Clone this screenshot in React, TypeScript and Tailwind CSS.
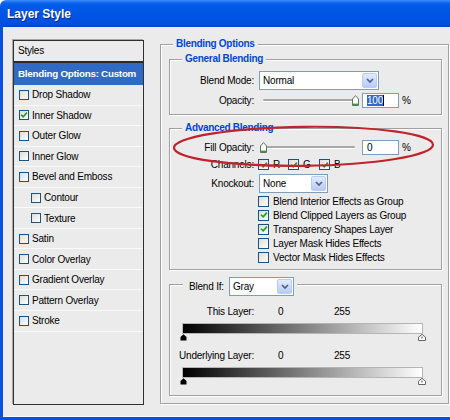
import React from "react";

function Check({ checked, small }: { checked?: boolean; small?: boolean }) {
  return (
    <span
      className={`flex shrink-0 items-center justify-center border border-[#1C5180] bg-[linear-gradient(135deg,#DCDCD7,#FFFFFF)] ${
        small ? "h-[10px] w-[10px]" : "h-[11px] w-[11px]"
      }`}
    >
      {checked && (
        <svg viewBox="0 0 9 9" className="h-[8px] w-[8px]">
          <path d="M1.2 4.2 L3.6 6.6 L7.8 1.8" stroke="#21A121" strokeWidth="1.9" fill="none" />
        </svg>
      )}
    </span>
  );
}

function Chevron() {
  return (
    <svg viewBox="0 0 8 5" className="h-[5px] w-[8px]">
      <path d="M1 1 L4 4 L7 1" stroke="#4D6185" strokeWidth="1.7" fill="none" />
    </svg>
  );
}

function Select({ value, w }: { value: string; w: string }) {
  return (
    <div className={`flex h-[19px] items-stretch border border-[#7F9DB9] bg-white ${w}`}>
      <span className="flex-1 pl-[3px] leading-[17px]">{value}</span>
      <span className="m-[1px] flex w-[15px] items-center justify-center rounded-[2px] border border-[#B9CCF5] bg-[linear-gradient(#E3EBFE,#B7CBF7)]">
        <Chevron />
      </span>
    </div>
  );
}

function Thumb() {
  return (
    <svg viewBox="0 0 7 11" className="h-[11px] w-[7px]">
      <path d="M0.5 4 L3.5 0.6 L6.5 4 L6.5 10.5 L0.5 10.5 Z" fill="#fff" stroke="#6B6B6B" strokeWidth="1" />
      <rect x="1" y="8.6" width="5" height="1.5" fill="#2CA52C" />
    </svg>
  );
}

function Slider({ full }: { full?: boolean }) {
  return (
    <div className="relative ml-[5px] h-[15px] w-[100px]">
      <div className="ml-[4px] mt-[6px] h-[2px] w-[92px] rounded-[1px] bg-[#A9A9A9] shadow-[0_1px_0_#fff]" />
      <div className={`absolute top-[2px] ${full ? "left-[93px]" : "left-[1px]"}`}>
        <Thumb />
      </div>
    </div>
  );
}

function TextBox({ children }: { children: React.ReactNode }) {
  return (
    <div className="ml-[3px] flex h-[15px] w-[37px] items-center border border-[#7F9DB9] bg-white pl-[4px]">
      {children}
    </div>
  );
}

function GroupTitle({ children }: { children: React.ReactNode }) {
  return (
    <div className="-mt-[7px] ml-[12px] h-[12px] w-fit bg-[#EBEBEB] px-[3px] font-bold leading-[12px] tracking-[-0.3px] text-[#0046D5]">
      {children}
    </div>
  );
}

function SmallThumbs() {
  return (
    <div className="ml-[10px] flex h-[7px] w-[246px] justify-between">
      <svg viewBox="0 0 7 7" className="h-[7px] w-[7px]">
        <path d="M0.5 3 L3.5 0.3 L6.5 3 L6.5 6.5 L0.5 6.5 Z" fill="#000" />
      </svg>
      <svg viewBox="0 0 8 7" className="h-[7px] w-[8px]">
        <path d="M0.5 3.2 L4 0.4 L7.5 3.2 L7.5 6.5 L0.5 6.5 Z" fill="#fff" stroke="#666" strokeWidth="1" />
        <path d="M4 2.5 L4 4.5" stroke="#444" strokeWidth="1" />
      </svg>
    </div>
  );
}

const styleRows: { label: string; checked?: boolean; indent?: boolean }[] = [
  { label: "Drop Shadow" },
  { label: "Inner Shadow", checked: true },
  { label: "Outer Glow" },
  { label: "Inner Glow" },
  { label: "Bevel and Emboss" },
  { label: "Contour", indent: true },
  { label: "Texture", indent: true },
  { label: "Satin" },
  { label: "Color Overlay" },
  { label: "Gradient Overlay" },
  { label: "Pattern Overlay" },
  { label: "Stroke" },
];

const advChecks: { label: string; checked?: boolean }[] = [
  { label: "Blend Interior Effects as Group" },
  { label: "Blend Clipped Layers as Group", checked: true },
  { label: "Transparency Shapes Layer", checked: true },
  { label: "Layer Mask Hides Effects" },
  { label: "Vector Mask Hides Effects" },
];

export default function App() {
  return (
    <div className="relative flex h-[420px] w-[450px] flex-col overflow-hidden font-['Liberation_Sans',Arial,sans-serif] text-[10px] tracking-[-0.2px] text-black">
      {/* Title bar */}
      <div className="flex h-[27px] shrink-0 items-center rounded-tl-[6px] bg-[linear-gradient(to_bottom,#3D8CF6_0px,#0C62EC_3px,#0059E8_6px,#0055E4_14px,#0050DF_23px,#0044CF_27px)] pl-[7px]">
        <span className="text-[12px] font-bold tracking-normal text-white [text-shadow:1px_1px_0_#0A2A8A]">
          Layer Style
        </span>
      </div>

      {/* Body */}
      <div className="flex flex-1 items-start border-b-[3px] border-l-[3px] border-[#0A4FDE] bg-[#EBEBEB] shadow-[inset_0_-1px_0_#fafafa]">
        {/* Styles list */}
        <div className="ml-[10px] mt-[13px] h-[365px] w-[131px] border border-[#303030] shadow-[-1px_-1px_0_#a8a8a8]">
          <div className="h-[22px] border-b-[2px] border-[#2a2a2a] pl-[4px] leading-[20px]">Styles</div>
          <div className="h-[22px] bg-[#316AC5] pl-[4px] text-[9.8px] font-bold leading-[22px] tracking-[-0.25px] text-white">
            Blending Options: Custom
          </div>
          {styleRows.map((r) => (
            <div
              key={r.label}
              className={`flex h-[20.55px] items-center gap-[3px] border-b border-[#fafafa] ${
                r.indent ? "pl-[17px]" : "pl-[5px]"
              }`}
            >
              <Check small checked={r.checked} />
              <span>{r.label}</span>
            </div>
          ))}
        </div>

        {/* Blending Options group */}
        <div className="ml-[16px] mt-[17px] h-[360px] w-[289px] border border-[#A0A0A0] pl-[8px] pr-[6px] shadow-[inset_1px_1px_0_#fff,1px_1px_0_#fff]">
          <div className="-mt-[7px] ml-[4px] h-[12px] w-fit bg-[#EBEBEB] px-[3px] font-bold leading-[12px] tracking-[-0.3px] text-[#0046D5]">
            Blending Options
          </div>

          {/* General Blending */}
          <div className="mt-[9px] h-[56px] border border-[#A0A0A0] shadow-[inset_1px_1px_0_#fff,1px_1px_0_#fff]">
            <GroupTitle>General Blending</GroupTitle>
            <div className="mt-[6px] flex h-[19px] items-center">
              <span className="w-[84px] text-right">Blend Mode:</span>
              <div className="ml-[5px]">
                <Select value="Normal" w="w-[120px]" />
              </div>
            </div>
            <div className="mt-[2px] flex h-[16px] items-center">
              <span className="w-[84px] text-right">Opacity:</span>
              <Slider full />
              <TextBox>
                <span className="bg-[#316AC5] leading-[11px] text-white">100</span>
                <span className="h-[11px] w-px bg-black" />
              </TextBox>
              <span className="ml-[3px]">%</span>
            </div>
          </div>

          {/* Advanced Blending */}
          <div className="mt-[13px] h-[142px] border border-[#A0A0A0] shadow-[inset_1px_1px_0_#fff,1px_1px_0_#fff]">
            <GroupTitle>Advanced Blending</GroupTitle>
            <div className="mt-[6px] flex h-[15px] items-center">
              <span className="w-[84px] text-right">Fill Opacity:</span>
              <Slider />
              <TextBox>
                <span>0</span>
              </TextBox>
              <span className="ml-[3px]">%</span>
            </div>
            <div className="mt-[4px] flex h-[11px] items-center">
              <span className="w-[84px] text-right">Channels:</span>
              <div className="ml-[4px] flex w-[30px] items-center gap-[4px]">
                <Check checked />
                <span>R</span>
              </div>
              <div className="flex w-[31px] items-center gap-[4px]">
                <Check checked />
                <span>G</span>
              </div>
              <div className="flex items-center gap-[4px]">
                <Check checked />
                <span>B</span>
              </div>
            </div>
            <div className="mt-[4px] flex h-[19px] items-center">
              <span className="w-[84px] text-right">Knockout:</span>
              <div className="ml-[5px]">
                <Select value="None" w="w-[69px]" />
              </div>
            </div>
            <div className="mt-[1px] pl-[88px]">
              {advChecks.map((c) => (
                <div key={c.label} className="flex h-[14px] items-center gap-[4px]">
                  <Check checked={c.checked} />
                  <span>{c.label}</span>
                </div>
              ))}
            </div>
          </div>

          {/* Blend If */}
          <div className="mt-[14px] h-[112px] border border-[#A0A0A0] shadow-[inset_1px_1px_0_#fff,1px_1px_0_#fff]">
            <div className="-mt-[8px] ml-[13px] flex h-[19px] w-fit items-center bg-[#EBEBEB] pl-[6px] pr-[3px]">
              <span className="w-[36px]">Blend If:</span>
              <div className="ml-[4px]">
                <Select value="Gray" w="w-[65px]" />
              </div>
            </div>
            <div className="mt-[9px] flex h-[12px] items-center">
              <span className="w-[84px] text-right">This Layer:</span>
              <span className="ml-[24px] w-[56px]">0</span>
              <span>255</span>
            </div>
            <div className="ml-[12px] mt-[6px] h-[11px] w-[241px] border border-[#B5B5B5] bg-[linear-gradient(to_right,#000,#fff)]" />
            <SmallThumbs />
            <div className="mt-[8px] flex h-[12px] items-center">
              <span className="w-[84px] text-right">Underlying Layer:</span>
              <span className="ml-[24px] w-[56px]">0</span>
              <span>255</span>
            </div>
            <div className="ml-[12px] mt-[6px] h-[11px] w-[241px] border border-[#B5B5B5] bg-[linear-gradient(to_right,#000,#fff)]" />
            <SmallThumbs />
          </div>
        </div>
      </div>

      {/* Red annotation ellipse */}
      <svg className="pointer-events-none absolute left-0 top-0 h-[420px] w-[450px]" viewBox="0 0 450 420">
        <ellipse
          cx="303.5"
          cy="146.3"
          rx="129.5"
          ry="19.5"
          fill="none"
          stroke="#C0232B"
          strokeWidth="2.2"
          transform="rotate(-0.7 303.5 146.3)"
        />
      </svg>
    </div>
  );
}
